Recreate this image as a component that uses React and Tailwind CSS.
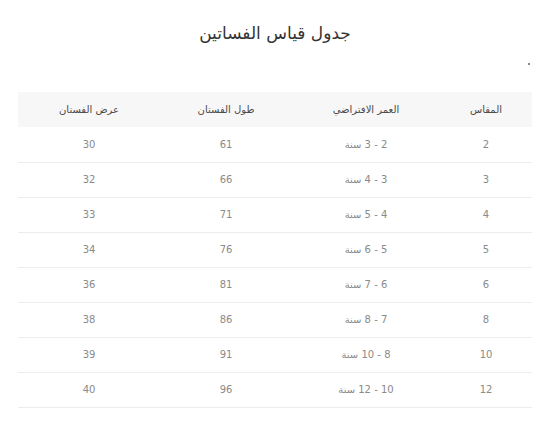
import React from "react";

const rows = [
  ["2", "2 - 3 سنة", "61", "30"],
  ["3", "3 - 4 سنة", "66", "32"],
  ["4", "4 - 5 سنة", "71", "33"],
  ["5", "5 - 6 سنة", "76", "34"],
  ["6", "6 - 7 سنة", "81", "36"],
  ["8", "7 - 8 سنة", "86", "38"],
  ["10", "8 - 10 سنة", "91", "39"],
  ["12", "10 - 12 سنة", "96", "40"],
];

const App = () => {
  return (
    <div
      dir="rtl"
      className="w-[550px] h-[425px] bg-white px-[18px] pt-[18px]"
      style={{ fontFamily: '"DejaVu Sans", "Liberation Sans", sans-serif' }}
    >
      {/* Title */}
      <h1 className="text-center text-[17px] leading-[30px] text-[#333] font-normal">
        جدول قياس الفساتين
      </h1>

      <div className="h-[44px] flex items-start pt-[15px] pr-[2px]">
        <span className="block w-[2px] h-[2px] bg-[#888]"></span>
      </div>

      <table className="w-[514px] border-collapse text-[10px] text-[#8a8a8a]">
        <thead>
          <tr className="bg-[#f7f7f7] h-[35px]">
            <th className="w-[92px] font-normal text-[#4a4a4a]">المقاس</th>
            <th className="w-[148px] font-normal text-[#4a4a4a]">العمر الافتراضي</th>
            <th className="w-[132px] font-normal text-[#4a4a4a]">طول الفستان</th>
            <th className="w-[142px] font-normal text-[#4a4a4a]">عرض الفستان</th>
          </tr>
        </thead>
        <tbody>
          {rows.map((r, i) => (
            <tr key={i} className="h-[35px] border-b border-[#ededed]">
              {r.map((c, j) => (
                <td key={j} className="text-center">
                  {c}
                </td>
              ))}
            </tr>
          ))}
        </tbody>
      </table>
    </div>
  );
};

export default App;
